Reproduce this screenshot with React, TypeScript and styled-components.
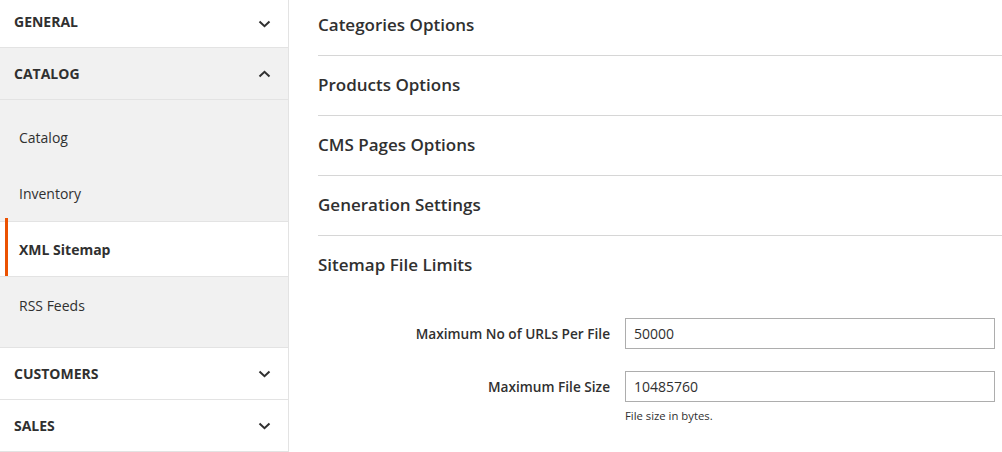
import styled, { createGlobalStyle } from "styled-components";

const GlobalStyle = createGlobalStyle`
  body {
    margin: 0;
    background: #fff;
    font-family: "Open Sans", "Noto Sans", sans-serif;
    color: #303030;
  }
`;

const Page = styled.div`
  display: flex;
  width: 1002px;
  height: 452px;
  overflow: hidden;
`;

const Sidebar = styled.nav`
  width: 288px;
  flex-shrink: 0;
  border-right: 1px solid #e3e3e3;
  display: flex;
  flex-direction: column;
`;

const GroupHeader = styled.div<{ $h?: number; $open?: boolean }>`
  height: ${(p) => p.$h ?? 51}px;
  padding: 0 17px 0 14px;
  display: flex;
  align-items: center;
  justify-content: space-between;
  background: ${(p) => (p.$open ? "#f1f1f1" : "#fff")};
  border-bottom: 1px solid #e3e3e3;
  font-size: 14px;
  font-weight: 700;
  text-transform: uppercase;
  color: #303030;
`;

const GroupTitle = styled.span<{ $shift?: number }>`
  position: relative;
  top: ${(p) => p.$shift ?? 0}px;
`;

const SubList = styled.div`
  background: #f1f1f1;
  padding: 9px 0 14px;
  border-bottom: 1px solid #e3e3e3;
`;

const SubItem = styled.div<{ $active?: boolean }>`
  position: relative;
  height: 56px;
  box-sizing: border-box;
  padding-left: 19px;
  display: flex;
  align-items: center;
  font-size: 14px;
  font-weight: ${(p) => (p.$active ? 700 : 400)};
  background: ${(p) => (p.$active ? "#fff" : "transparent")};
  border-top: ${(p) => (p.$active ? "1px solid #e3e3e3" : "none")};
  border-bottom: ${(p) => (p.$active ? "1px solid #e3e3e3" : "none")};

  ${(p) =>
    p.$active &&
    `
    &::before {
      content: "";
      position: absolute;
      left: 5px;
      top: -4px;
      bottom: 0;
      width: 3px;
      background: #eb5202;
    }
  `}
`;

const Main = styled.main`
  flex: 1;
  padding-left: 29px;
  display: flex;
  flex-direction: column;
`;

const Section = styled.div<{ $h: number; $pb: number; $last?: boolean }>`
  height: ${(p) => p.$h}px;
  box-sizing: border-box;
  display: flex;
  align-items: center;
  padding-bottom: ${(p) => p.$pb}px;
  border-bottom: ${(p) => (p.$last ? "none" : "1px solid #d6d6d6")};
  font-size: 17px;
  font-weight: 600;
  color: #303030;
`;

const Form = styled.div`
  display: grid;
  grid-template-columns: 292px 370px;
  column-gap: 15px;
  row-gap: 22px;
  padding-top: 22px;
`;

const Label = styled.label<{ $top?: boolean }>`
  justify-self: end;
  align-self: ${(p) => (p.$top ? "start" : "center")};
  margin-top: ${(p) => (p.$top ? "6px" : "0")};
  font-size: 13.65px;
  font-weight: 600;
  color: #303030;
`;

const Field = styled.div`
  display: flex;
  flex-direction: column;
`;

const Input = styled.input`
  height: 31px;
  box-sizing: border-box;
  border: 1px solid #adadad;
  padding: 0 8px;
  font-family: inherit;
  font-size: 14px;
  color: #303030;
  outline: none;
`;

const Note = styled.div`
  margin-top: 6px;
  font-size: 11.3px;
  color: #303030;
`;

const Chevron = ({ up }: { up?: boolean }) => (
  <svg width="13" height="8" viewBox="0 0 13 8">
    <polyline
      points={up ? "1.5,6.5 6.5,1.8 11.5,6.5" : "1.5,1.5 6.5,6.2 11.5,1.5"}
      fill="none"
      stroke="#303030"
      strokeWidth="2"
    />
  </svg>
);

const sections = [
  { title: "Categories Options", h: 56, pb: 7 },
  { title: "Products Options", h: 60, pb: 3 },
  { title: "CMS Pages Options", h: 60, pb: 3 },
  { title: "Generation Settings", h: 60, pb: 3 },
  { title: "Sitemap File Limits", h: 60, pb: 3, last: true },
];

export default function App() {
  return (
    <>
      <GlobalStyle />
      <Page>
        <Sidebar>
          <GroupHeader $h={47}>
            <GroupTitle $shift={-2}>General</GroupTitle>
            <Chevron />
          </GroupHeader>
          <GroupHeader $open>
            <span>Catalog</span>
            <Chevron up />
          </GroupHeader>
          <SubList>
            <SubItem>Catalog</SubItem>
            <SubItem>Inventory</SubItem>
            <SubItem $active>XML Sitemap</SubItem>
            <SubItem>RSS Feeds</SubItem>
          </SubList>
          <GroupHeader>
            <span>Customers</span>
            <Chevron />
          </GroupHeader>
          <GroupHeader>
            <span>Sales</span>
            <Chevron />
          </GroupHeader>
        </Sidebar>
        <Main>
          {sections.map((s) => (
            <Section key={s.title} $h={s.h} $pb={s.pb} $last={s.last}>
              {s.title}
            </Section>
          ))}
          <Form>
            <Label>Maximum No of URLs Per File</Label>
            <Input defaultValue="50000" />
            <Label $top>Maximum File Size</Label>
            <Field>
              <Input defaultValue="10485760" />
              <Note>File size in bytes.</Note>
            </Field>
          </Form>
        </Main>
      </Page>
    </>
  );
}
